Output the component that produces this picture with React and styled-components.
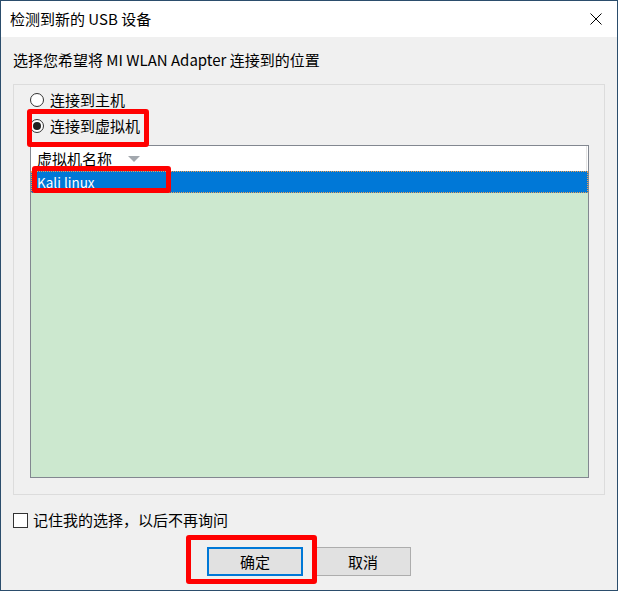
import React from "react";
import styled, { createGlobalStyle } from "styled-components";

const Global = createGlobalStyle`
  html, body { margin: 0; padding: 0; background: #ffffff; }
  body { font-family: "Noto Sans CJK SC", "Noto Sans", sans-serif; font-size: 15px; color: #000; }
  * { box-sizing: border-box; }
`;

const Window = styled.div`
  position: relative;
  width: 618px;
  height: 591px;
  border: 1px solid #2b4d6c;
  background: #f0f0f0;
  display: flex;
  flex-direction: column;
`;

const TitleBar = styled.div`
  height: 36px;
  flex: none;
  background: #ffffff;
  display: flex;
  align-items: center;
  justify-content: space-between;
  padding: 0 15px 0 9px;
  line-height: 20px;
`;

const TitleText = styled.span`
  font-size: 15px;
`;

const Body = styled.div`
  flex: 1;
  display: flex;
  flex-direction: column;
  padding: 0 12px;
`;

const Prompt = styled.div`
  margin-top: 13px;
  height: 20px;
  line-height: 20px;
  white-space: nowrap;
`;

const Group = styled.div`
  margin-top: 14px;
  height: 411px;
  border: 1px solid #dcdcdc;
  display: flex;
  flex-direction: column;
  padding: 2px 15px 16px 16px;
`;

const RadioRow = styled.label`
  height: 26px;
  display: flex;
  align-items: center;
  gap: 6px;
  line-height: 20px;
`;

const RadioCircle = styled.span`
  width: 14px;
  height: 14px;
  border-radius: 50%;
  border: 1px solid #333333;
  background: #ffffff;
  display: flex;
  align-items: center;
  justify-content: center;
  &::after {
    content: "";
    width: 8px;
    height: 8px;
    border-radius: 50%;
    background: ${(p) => (p.$checked ? "#222222" : "transparent")};
  }
`;

const List = styled.div`
  margin-top: 6px;
  flex: 1;
  border: 1px solid #828790;
  background: #cce8cf;
  display: flex;
  flex-direction: column;
`;

const Header = styled.div`
  height: 25px;
  background: #ffffff;
  display: flex;
`;

const HeaderCell = styled.div`
  flex: 1;
  display: flex;
  align-items: center;
  padding-left: 6px;
  border-right: 1px solid #e5e5e5;
  margin-right: 1px;
  line-height: 20px;
`;

const SortArrow = styled.span`
  margin-left: 16px;
  width: 0;
  height: 0;
  border-left: 6px solid transparent;
  border-right: 6px solid transparent;
  border-top: 6px solid #a3a8ae;
`;

const Row = styled.div`
  height: 22px;
  display: flex;
  align-items: center;
  padding-left: 6px;
  font-size: 13.5px;
  background: ${(p) => (p.$selected ? "#0078d7" : "transparent")};
  color: ${(p) => (p.$selected ? "#ffffff" : "#000000")};
  outline: ${(p) => (p.$selected ? "1px dotted #f0a050" : "none")};
  outline-offset: -1px;
  line-height: 20px;
`;

const CheckRow = styled.label`
  margin-top: 15px;
  height: 20px;
  display: flex;
  align-items: center;
  gap: 5px;
  line-height: 20px;
`;

const CheckBox = styled.span`
  width: 15px;
  height: 15px;
  border: 1px solid #333333;
  background: #ffffff;
`;

const Buttons = styled.div`
  margin-top: 17px;
  display: flex;
  justify-content: center;
  gap: 12px;
`;

const Button = styled.button`
  width: 96px;
  height: 29px;
  font-family: inherit;
  font-size: 15px;
  line-height: 20px;
  color: #000;
  background: #e1e1e1;
  border: ${(p) => (p.$default ? "2px solid #0078d7" : "1px solid #adadad")};
  padding: 0;
`;

const Mark = styled.div`
  position: absolute;
  border: 5px solid #ff0000;
  border-radius: 3px;
  pointer-events: none;
`;

export default function App() {
  return (
    <>
      <Global />
      <Window>
        <TitleBar>
          <TitleText>检测到新的 USB 设备</TitleText>
          <svg width="12" height="12" viewBox="0 0 12 12">
            <path d="M0.5 0.5 L11.5 11.5 M11.5 0.5 L0.5 11.5" stroke="#000" strokeWidth="1" fill="none" />
          </svg>
        </TitleBar>
        <Body>
          <Prompt>选择您希望将 MI WLAN Adapter 连接到的位置</Prompt>
          <Group>
            <RadioRow>
              <RadioCircle />
              连接到主机
            </RadioRow>
            <RadioRow>
              <RadioCircle $checked />
              连接到虚拟机
            </RadioRow>
            <List>
              <Header>
                <HeaderCell>
                  虚拟机名称
                  <SortArrow />
                </HeaderCell>
              </Header>
              <Row $selected>Kali linux</Row>
            </List>
          </Group>
          <CheckRow>
            <CheckBox />
            记住我的选择，以后不再询问
          </CheckRow>
          <Buttons>
            <Button $default>确定</Button>
            <Button>取消</Button>
          </Buttons>
        </Body>
        <Mark style={{ left: 26, top: 108, width: 122, height: 38 }} />
        <Mark style={{ left: 31, top: 165, width: 139, height: 27 }} />
        <Mark style={{ left: 185, top: 534, width: 131, height: 49 }} />
      </Window>
    </>
  );
}
